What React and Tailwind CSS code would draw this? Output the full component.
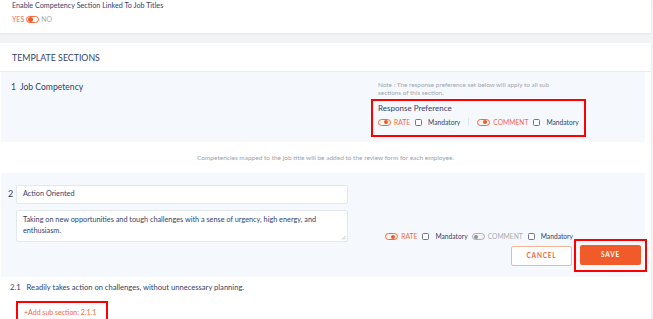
import React from "react";

const navy = "text-[#34426a]";

function Toggle({ on = true, left = false }) {
  // small pill switch used next to RATE / COMMENT
  return (
    <span
      className={`relative inline-flex h-[7px] w-[13px] shrink-0 items-center rounded-full border ${
        on ? "border-[#f26a3d] bg-[#fff3ee]" : "border-[#a9adb6] bg-[#f1f2f4]"
      }`}
    >
      <span
        className={`absolute h-[4px] w-[4px] rounded-full ${
          on ? "bg-[#f15a29]" : "bg-[#8e939c]"
        } ${left ? "left-[1px]" : "left-[5px]"}`}
      />
    </span>
  );
}

function Box() {
  return <span className="inline-block h-[7px] w-[7px] shrink-0 rounded-[1.5px] border border-[#6b7490] bg-white" />;
}

function PrefRow({ commentOn = true, divider = false }) {
  return (
    <div className="flex items-center whitespace-nowrap text-[6.7px] leading-none">
      <Toggle />
      <span className="ml-[3px] text-[#f26a3d]">RATE</span>
      <span className="ml-[5px] flex"><Box /></span>
      <span className={`ml-[6px] ${navy}`}>Mandatory</span>
      {divider ? (
        <span className="mx-[8px] h-[8px] w-px shrink-0 bg-[#dfe3ea]" />
      ) : (
        <span className="w-[4px] shrink-0" />
      )}
      <Toggle on={commentOn} left={!commentOn} />
      <span className={`ml-[3px] ${commentOn ? "text-[#f26a3d]" : "text-[#a9adb6]"}`}>COMMENT</span>
      <span className="ml-[5px] flex"><Box /></span>
      <span className={`ml-[6px] ${navy}`}>Mandatory</span>
    </div>
  );
}

export default function App() {
  return (
    <div className="h-[319px] w-[653px] overflow-hidden bg-[#f2f3f5] font-['Lato','Noto_Sans',sans-serif]">
      {/* top settings card */}
      <div className="mr-[2px] h-[33px] bg-white px-[12px] pt-[2px] shadow-[0_1px_2px_rgba(0,0,0,0.06)]">
        <div className={`text-[7.2px] leading-[8px] ${navy}`}>Enable Competency Section Linked To Job Titles</div>
        <div className="mt-[6px] flex items-center text-[7px] leading-none">
          <span className="text-[#f26a3d]">YES</span>
          <span className="ml-[2px] relative inline-flex h-[7px] w-[13px] items-center rounded-full border border-[#f26a3d]">
            <span className="absolute left-[1px] h-[5px] w-[5px] rounded-full bg-[#f15a29]" />
          </span>
          <span className="ml-[2px] text-[#a9adb6]">NO</span>
        </div>
      </div>

      {/* template sections card */}
      <div className="mr-[2px] mt-[10px] h-[300px] bg-white shadow-[0_1px_2px_rgba(0,0,0,0.06)]">
        <div className={`flex h-[29px] items-center border-b border-[#e8ebf0] px-[12px] pt-[2px] text-[8.8px] ${navy}`}>
          TEMPLATE SECTIONS
        </div>

        {/* section 1 */}
        <div className="ml-[1px] mr-[6px] flex h-[70px] bg-[#f5f9fe]">
          <div className={`flex-1 pl-[10px] pt-[9px] text-[8.6px] ${navy}`}>
            <span>1</span>
            <span className="ml-[4px]">Job Competency</span>
          </div>
          <div className="w-[274px] pt-[9px]">
            <div className="pl-[7px] text-[6.4px] leading-[8px] text-[#a0a5ae]">
              Note : The response preference set below will apply to all sub
              <br />
              sections of this section.
            </div>
            <div className="mt-[2px] h-[38px] w-[215px] border-2 border-[#ff0000] pl-[5px] pt-[2px]">
              <div className={`text-[8px] leading-[10px] ${navy}`}>Response Preference</div>
              <div className="mt-[5px]">
                <PrefRow divider />
              </div>
            </div>
          </div>
        </div>

        <div className="flex h-[31px] items-center justify-center text-[6.5px] text-[#9ca1ab]">
          Competencies mapped to the job title will be added to the review form for each employee.
        </div>

        {/* section 2 */}
        <div className="ml-[1px] mr-[6px] flex h-[104px] bg-[#f5f9fe] pt-[12px]">
          <div className={`w-[15px] pl-[7px] pt-[4px] text-[9px] leading-[10px] ${navy}`}>2</div>
          <div className="w-[332px]">
            <div className={`flex h-[19px] items-center rounded-[2px] border border-[#e3e7ee] bg-white pl-[6px] text-[7.3px] ${navy}`}>
              Action Oriented
            </div>
            <div className={`relative mt-[6px] h-[32px] rounded-[2px] border border-[#e3e7ee] bg-white px-[6px] pt-[3px] text-[7.3px] leading-[11px] ${navy}`}>
              Taking on new opportunities and tough challenges with a sense of urgency, high energy, and
              <br />
              enthusiasm.
              <svg className="absolute bottom-[1px] right-[1px]" width="5" height="5" viewBox="0 0 5 5">
                <path d="M4.5 1 L1 4.5 M4.5 3 L3 4.5" stroke="#9aa0aa" strokeWidth="0.6" />
              </svg>
            </div>
          </div>
          <div className="flex flex-1 flex-col items-end">
            <div className="mr-[72px] mt-[48px]">
              <PrefRow commentOn={false} />
            </div>
            <div className="-mt-[1px] flex items-center">
              <button className="h-[20px] w-[61px] rounded-[2px] border border-[#f5b49c] bg-white text-[6.5px] font-bold tracking-[0.12em] text-[#f26a3d]">
                CANCEL
              </button>
              <div className="ml-[2px] -mr-[2px] border-2 border-[#ff0000] p-[4px] pb-[5px]">
                <button className="block h-[20px] w-[61px] rounded-[2px] bg-[#f15a29] text-[6.5px] font-bold tracking-[0.12em] text-white">
                  SAVE
                </button>
              </div>
            </div>
          </div>
        </div>

        <div className={`flex h-[21px] items-center pl-[10px] text-[7.6px] ${navy}`}>
          <span>2.1</span>
          <span className="ml-[6px]">Readily takes action on challenges, without unnecessary planning.</span>
        </div>
        <div className="ml-[16px] mt-[3px] flex h-[20px] w-[92px] items-start border-2 border-[#ff0000] pl-[6px] pt-[4px] text-[7px] text-[#f26a3d]">
          +Add sub section: 2.1.1
        </div>
      </div>
    </div>
  );
}
